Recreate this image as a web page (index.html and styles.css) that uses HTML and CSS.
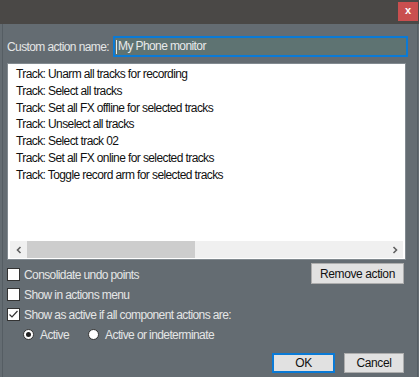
FILE: index.html
```html
<!DOCTYPE html>
<html lang="en">
<head>
    <meta charset="UTF-8">
    <title>Custom action</title>
    <link rel="stylesheet" href="styles.css">
</head>
<body>

<div class="window">
    <div class="titlebar">
        <div class="close">x</div>
    </div>

    <div class="content">
        <div class="name-row">
            <span class="label">Custom action name:</span>
            <div class="name-input"><span class="caret"></span>My Phone monitor</div>
        </div>

        <div class="list">
            <div class="items">
                <div class="item">Track: Unarm all tracks for recording</div>
                <div class="item">Track: Select all tracks</div>
                <div class="item">Track: Set all FX offline for selected tracks</div>
                <div class="item">Track: Unselect all tracks</div>
                <div class="item">Track: Select track 02</div>
                <div class="item">Track: Set all FX online for selected tracks</div>
                <div class="item">Track: Toggle record arm for selected tracks</div>
            </div>
            <div class="hscroll">
                <span class="arrow">
                    <svg width="8" height="8" viewBox="0 0 8 8"><path d="M5.5 1 L2.5 4 L5.5 7" fill="none" stroke="#606060" stroke-width="1.6"/></svg>
                </span>
                <div class="track"><div class="thumb"></div></div>
                <span class="arrow">
                    <svg width="8" height="8" viewBox="0 0 8 8"><path d="M2.5 1 L5.5 4 L2.5 7" fill="none" stroke="#606060" stroke-width="1.6"/></svg>
                </span>
            </div>
        </div>

        <div class="options">
            <div class="checks">
                <label class="check"><span class="box"></span>Consolidate undo points</label>
                <label class="check"><span class="box"></span>Show in actions menu</label>
                <label class="check">
                    <span class="box">
                        <svg width="11" height="11" viewBox="0 0 11 11"><path d="M1.5 5.5 L4 8 L9.5 2" fill="none" stroke="#333" stroke-width="1.2"/></svg>
                    </span>Show as active if all component actions are:
                </label>
                <div class="radios">
                    <label class="radio"><span class="dot on"></span>Active</label>
                    <label class="radio"><span class="dot"></span>Active or indeterminate</label>
                </div>
            </div>
            <button class="btn remove">Remove action</button>
        </div>

        <div class="footer">
            <button class="btn ok">OK</button>
            <button class="btn">Cancel</button>
        </div>
    </div>
</div>

</body>
</html>
```

FILE: styles.css
```css
body {
    margin: 0;
    padding: 0;
    font-family: "Liberation Sans", Arial, sans-serif;
    font-size: 12px;
    letter-spacing: -0.6px;
}
.window {
    width: 419px;
    height: 377px;
    background-color: #646c72;
    display: flex;
    flex-direction: column;
    overflow: hidden;
}
.titlebar {
    height: 24px;
    background-color: #4a4846;
    display: flex;
    justify-content: flex-end;
    align-items: flex-start;
    padding-top: 2px;
    box-sizing: border-box;
}
.close {
    width: 20px;
    height: 19px;
    margin-right: 1px;
    background-color: #c94f4f;
    color: #fff;
    font-weight: bold;
    font-size: 11px;
    letter-spacing: 0;
    line-height: 17px;
    text-align: center;
}
.content {
    flex: 1;
    border-left: 1px solid #555d63;
    border-right: 1px solid #555d63;
    margin: 0 1px 0 2px;
    padding: 12px 0 0 3px;
    display: flex;
    flex-direction: column;
    color: #e4e6e6;
}
.name-row {
    display: flex;
    align-items: center;
    height: 21px;
}
.label {
    width: 107px;
    padding-left: 1px;
    box-sizing: border-box;
    white-space: nowrap;
}
.name-input {
    width: 290px;
    height: 17px;
    border: 2px solid #0a7ad6;
    background-color: #5e7372;
    color: #e8eaea;
    line-height: 17px;
    padding-left: 1px;
    display: flex;
    align-items: center;
}
.caret {
    width: 1px;
    height: 14px;
    background-color: #e8eaea;
    margin-right: 1px;
}
.list {
    width: 397px;
    height: 195px;
    margin-top: 6px;
    margin-left: 1px;
    border: 1px solid #828a90;
    background-color: #fff;
    display: flex;
    flex-direction: column;
}
.items {
    flex: 1;
    padding: 2px 0 0 8px;
    color: #101010;
}
.item {
    height: 16.8px;
    line-height: 16.8px;
}
.hscroll {
    height: 17px;
    margin: 0 2px 1px 2px;
    background-color: #f0f0f0;
    display: flex;
    align-items: center;
}
.arrow {
    width: 17px;
    height: 17px;
    display: flex;
    align-items: center;
    justify-content: center;
}
.track {
    flex: 1;
    height: 17px;
}
.thumb {
    width: 168px;
    height: 17px;
    background-color: #cdcdcd;
}
.options {
    display: flex;
    justify-content: space-between;
    align-items: flex-start;
    margin-top: 8px;
    padding-left: 1px;
}
.checks {
    display: flex;
    flex-direction: column;
    gap: 7px;
}
.check {
    display: flex;
    align-items: center;
    gap: 4px;
    height: 13px;
}
.box {
    width: 11px;
    height: 11px;
    border: 1px solid #333;
    background-color: #fff;
    display: flex;
}
.radios {
    display: flex;
    gap: 19px;
    padding-left: 16px;
}
.radio {
    display: flex;
    align-items: center;
    gap: 6px;
    height: 13px;
}
.dot {
    width: 9px;
    height: 9px;
    border: 1px solid #333;
    border-radius: 50%;
    background-color: #fff;
    display: flex;
    align-items: center;
    justify-content: center;
}
.dot.on::after {
    content: "";
    width: 5px;
    height: 5px;
    border-radius: 50%;
    background-color: #222;
}
.btn {
    font-family: "Liberation Sans", Arial, sans-serif;
    font-size: 12px;
    letter-spacing: -0.4px;
    color: #111;
    background-color: #e1e1e1;
    border: 1px solid #adadad;
    padding: 0;
    height: 21px;
}
.remove {
    width: 93px;
    margin-top: -5px;
    margin-right: 13px;
}
.footer {
    display: flex;
    justify-content: flex-end;
    gap: 9px;
    margin-top: auto;
    margin-bottom: 4px;
    padding-right: 13px;
}
.footer .btn {
    width: 60px;
    height: 20px;
}
.footer .ok {
    width: 63px;
    border: 2px solid #0a7ad6;
}
```
